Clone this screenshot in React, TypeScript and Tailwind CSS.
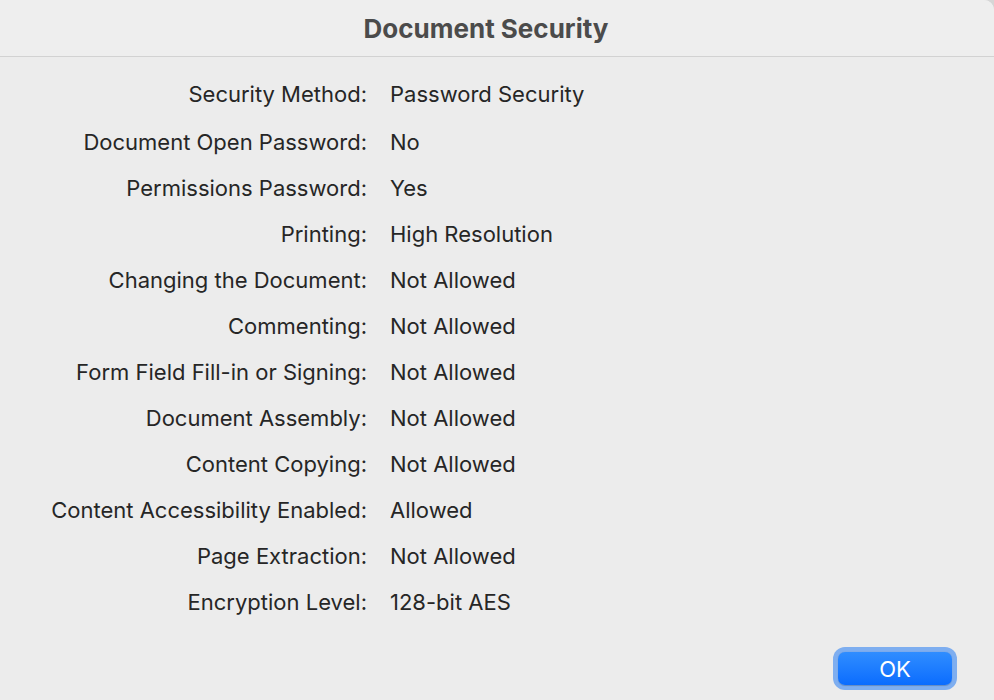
import React from 'react';

const rows: [string, string][] = [
  ['Security Method:', 'Password Security'],
  ['Document Open Password:', 'No'],
  ['Permissions Password:', 'Yes'],
  ['Printing:', 'High Resolution'],
  ['Changing the Document:', 'Not Allowed'],
  ['Commenting:', 'Not Allowed'],
  ['Form Field Fill-in or Signing:', 'Not Allowed'],
  ['Document Assembly:', 'Not Allowed'],
  ['Content Copying:', 'Not Allowed'],
  ['Content Accessibility Enabled:', 'Allowed'],
  ['Page Extraction:', 'Not Allowed'],
  ['Encryption Level:', '128-bit AES'],
];

const App: React.FC = () => {
  return (
    <div className="w-[994px] h-[700px] bg-[#d6d6d6] overflow-hidden font-['Inter','Liberation_Sans',sans-serif]">
      <div className="w-full h-full bg-[#ececec] rounded-tr-[10px] flex flex-col">
        {/* Title bar */}
        <div className="h-[57px] shrink-0 bg-[#eeeeee] rounded-tr-[10px] border-b border-[#d2d2d2] flex items-center justify-center pr-[22px]">
          <h1 className="text-[26px] font-bold text-[#4b4b4b]">Document Security</h1>
        </div>

        {/* Info rows */}
        <div className="pt-[14px] flex flex-col text-[22px] text-[#262626]">
          {rows.map(([label, value], i) => (
            <div key={label} className={`flex items-center h-[46px] ${i === 0 ? 'mb-[2px]' : ''}`}>
              <div className="w-[367px] text-right whitespace-nowrap">{label}</div>
              <div className="pl-[23px] whitespace-nowrap">{value}</div>
            </div>
          ))}
        </div>

        {/* Footer */}
        <div className="flex justify-end pr-[37px] mt-[22px]">
          <div className="p-[5px] rounded-[12px] bg-[#7eaef0]">
            <button className="w-[114px] h-[33px] rounded-[7px] bg-gradient-to-b from-[#2f8dff] to-[#0a6cfe] text-white text-[22px] leading-none flex items-center justify-center shadow-[0_0.5px_1px_rgba(0,0,0,0.2)]">
              OK
            </button>
          </div>
        </div>
      </div>
    </div>
  );
};

export default App;
